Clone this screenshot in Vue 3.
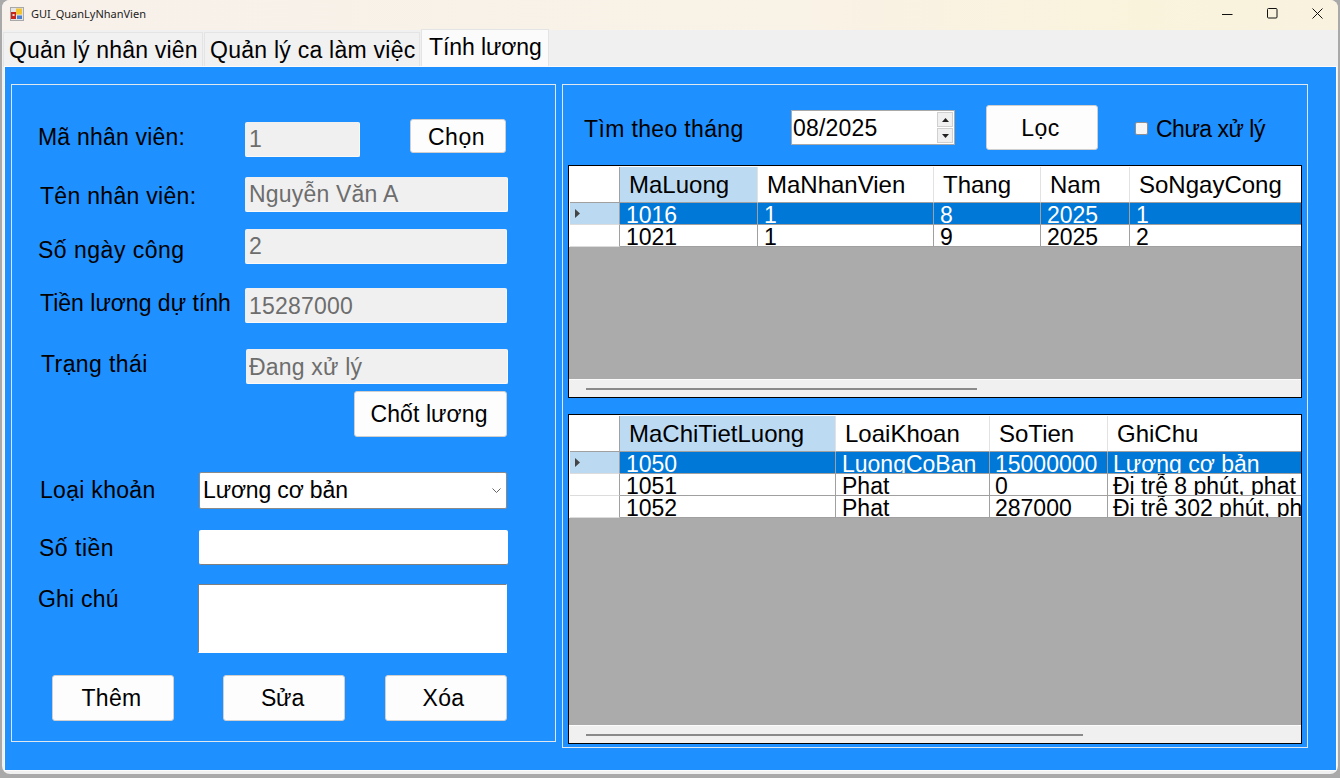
<script setup>
const grid1 = {
  cols: [50, 138, 176, 107, 89, 240],
  head: ['MaLuong', 'MaNhanVien', 'Thang', 'Nam', 'SoNgayCong'],
  rows: [
    ['1016', '1', '8', '2025', '1'],
    ['1021', '1', '9', '2025', '2'],
  ],
}
const grid2 = {
  cols: [50, 216, 154, 118, 260],
  head: ['MaChiTietLuong', 'LoaiKhoan', 'SoTien', 'GhiChu'],
  rows: [
    ['1050', 'LuongCoBan', '15000000', 'Lương cơ bản'],
    ['1051', 'Phat', '0', 'Đi trễ 8 phút, phạt 0'],
    ['1052', 'Phat', '287000', 'Đi trễ 302 phút, phạt'],
  ],
}
const tpl = (g) => ({ gridTemplateColumns: g.cols.map((c) => c + 'px').join(' ') })
const grids = [
  { ...grid1, cls: 'dg1', thumb: 'th1' },
  { ...grid2, cls: 'dg2', thumb: 'th2' },
]
</script>

<template>
  <div class="win">
    <header class="titlebar">
      <svg class="appicon" width="14" height="14" viewBox="0 0 14 14">
        <rect x="0.5" y="0.5" width="13" height="13" fill="#e4e4e4" stroke="#a8a8a8" />
        <rect x="1" y="5" width="5" height="7" fill="#c8241c" />
        <rect x="2.5" y="7" width="2" height="2" fill="#f4dcd8" />
        <rect x="6" y="1.5" width="6" height="6" fill="#f2c230" />
        <rect x="7" y="8.5" width="5" height="3.5" fill="#4a7fd0" />
      </svg>
      <span class="wintitle">GUI_QuanLyNhanVien</span>
      <div class="controls">
        <svg width="11" height="11" viewBox="0 0 11 11"><path d="M0 6.5H10.5" stroke="#111" fill="none" /></svg>
        <svg width="11" height="11" viewBox="0 0 11 11"><rect x="0.5" y="0.5" width="9.5" height="9.5" rx="1" stroke="#111" fill="none" /></svg>
        <svg width="11" height="11" viewBox="0 0 11 11"><path d="M0.5 0.5L10.5 10.5M10.5 0.5L0.5 10.5" stroke="#111" fill="none" /></svg>
      </div>
    </header>

    <nav class="tabs">
      <div class="tab t1">Quản lý nhân viên</div>
      <div class="tab t2">Quản lý ca làm việc</div>
      <div class="tab t3 active">Tính lương</div>
    </nav>

    <main class="content">
      <section class="panel left">
        <div class="row r1">
          <label class="lbl">Mã nhân viên:</label>
          <input class="field ro w115" value="1" readonly />
          <button class="btn chon">Chọn</button>
        </div>
        <div class="row r2">
          <label class="lbl">Tên nhân viên:</label>
          <input class="field ro w263" value="Nguyễn Văn A" readonly />
        </div>
        <div class="row r3">
          <label class="lbl">Số ngày công</label>
          <input class="field ro w262" value="2" readonly />
        </div>
        <div class="row r4">
          <label class="lbl">Tiền lương dự tính</label>
          <input class="field ro w262" value="15287000" readonly />
        </div>
        <div class="row r5">
          <label class="lbl">Trạng thái</label>
          <input class="field ro w262" value="Đang xử lý" readonly />
        </div>
        <div class="row r6">
          <button class="btn chot">Chốt lương</button>
        </div>
        <div class="row r7">
          <label class="lbl">Loại khoản</label>
          <div class="combo">
            <span>Lương cơ bản</span>
            <svg width="9" height="6" viewBox="0 0 9 6"><path d="M0.5 0.5L4.5 4.5L8.5 0.5" stroke="#666" fill="none" /></svg>
          </div>
        </div>
        <div class="row r8">
          <label class="lbl">Số tiền</label>
          <input class="field plain" value="" />
        </div>
        <div class="row r9">
          <label class="lbl">Ghi chú</label>
          <textarea class="note"></textarea>
        </div>
        <div class="row r10">
          <button class="btn act">Thêm</button>
          <button class="btn act sua">Sửa</button>
          <button class="btn act xoa">Xóa</button>
        </div>
      </section>

      <section class="panel right">
        <div class="toolbar">
          <label class="lbl find">Tìm theo tháng</label>
          <div class="spin">
            <span class="spinval">08/2025</span>
            <div class="spinbtns">
              <span class="sb"><svg width="7" height="4" viewBox="0 0 7 4"><path d="M3.5 0L7 4H0Z" fill="#222" /></svg></span>
              <span class="sb"><svg width="7" height="4" viewBox="0 0 7 4"><path d="M0 0H7L3.5 4Z" fill="#222" /></svg></span>
            </div>
          </div>
          <button class="btn loc">Lọc</button>
          <span class="check"></span>
          <span class="lbl checktext">Chưa xử lý</span>
        </div>

        <div v-for="g in grids" :key="g.cls" class="dg" :class="g.cls">
          <div class="dgrow head" :style="tpl(g)">
            <div class="hc corner"></div>
            <div v-for="(h, i) in g.head" :key="h" class="hc" :class="{ cur: i === 0 }">{{ h }}</div>
          </div>
          <div v-for="(r, ri) in g.rows" :key="r[0]" class="dgrow body" :class="{ sel: ri === 0 }" :style="tpl(g)">
            <div class="rh">
              <svg v-if="ri === 0" width="5" height="9" viewBox="0 0 5 9"><path d="M0 0L5 4.5L0 9Z" fill="#444" /></svg>
            </div>
            <div v-for="(c, ci) in r" :key="ci" class="cell">{{ c }}</div>
          </div>
          <div class="fill"></div>
          <div class="hscroll"><span class="thumb" :class="g.thumb"></span></div>
        </div>
      </section>
    </main>
  </div>
</template>

<style>
html, body { margin: 0; background: #a9a9a9; overflow: hidden; }
</style>

<style scoped>
* { box-sizing: border-box; }
.win {
  width: 1336px; height: 774px; margin-left: 2px; background: #f0f0f0;
  border-radius: 8px; overflow: hidden; color: #000;
  font-family: "Liberation Sans", Arial, sans-serif; font-size: 23px;
  display: flex; flex-direction: column;
}
.titlebar {
  height: 30px; flex: none; display: flex; align-items: center; padding: 0 0 3px 8px;
  background: linear-gradient(90deg, #f8f1eb 0%, #f9f2e6 60%, #faf3dc 85%, #f8f2df 100%);
}
.appicon { flex: none; }
.wintitle { margin-left: 7px; font: 11px "Noto Sans", sans-serif; color: #222; }
.controls { margin-left: auto; padding-right: 15px; display: flex; gap: 34px; align-items: center; }

.tabs { height: 37px; flex: none; display: flex; align-items: flex-end; padding-left: 1px; }
.tab {
  height: 35px; background: #f1f1f1; border: 1px solid #e4e4e4; border-bottom: none;
  line-height: 35px; white-space: nowrap; padding-left: 5px; margin-right: 1px; letter-spacing: 0.2px;
}
.t1 { width: 200px; }
.t2 { width: 216px; padding-left: 5px; letter-spacing: 0.25px; }
.t3 { width: 128px; }
.active { height: 38px; background: #fbfbfb; line-height: 35px; padding-left: 7px; letter-spacing: -0.1px; }

.content {
  height: 703px; flex: none; margin-left: 3px; width: 1331px; background: #1e90ff;
  display: flex; align-items: flex-start; padding: 17px 0 0 6px;
  box-shadow: 0 0 0 1px #fbfbfb;
}
.panel { border: 1px solid #dfe8f0; flex: none; }
.left { width: 545px; height: 658px; }
.right { width: 746px; height: 664px; margin-left: 6px; }

.row { display: flex; align-items: flex-start; }
.lbl { line-height: 28px; white-space: nowrap; display: block; flex: none; letter-spacing: 0.2px; }
.field {
  height: 35px; border: none; border-radius: 2px; font: inherit; padding: 1px 3px 0 4px; margin: 0;
  outline: none; flex: none; display: block; letter-spacing: 0.2px;
}
.ro { background: #f0f0f0; color: #6d6d6d; border-bottom: 1px solid #fafafa; border-right: 1px solid #fafafa; }
.w115 { width: 115px; }
.w263 { width: 263px; }
.w262 { width: 262px; }
.btn {
  font: inherit; color: #000; background: #fdfdfd; border: 1px solid #cfcfcf; border-radius: 3px;
  padding: 2px 3px 0 0; flex: none; letter-spacing: 0.1px;
}

.r1 { margin-top: 34px; }
.r1 .lbl { width: 233px; padding-left: 26px; margin-top: 4px; }
.r1 .field { margin-top: 3px; }
.chon { width: 96px; height: 34px; margin-left: 50px; letter-spacing: 0.5px; }
.r2 { margin-top: 20px; }
.r2 .lbl { width: 233px; padding-left: 28px; margin-top: 5px; letter-spacing: 0.3px; }
.r3 { margin-top: 17px; }
.r3 .lbl { width: 233px; padding-left: 26px; margin-top: 7px; letter-spacing: 0.5px; }
.r4 { margin-top: 24px; }
.r4 .lbl { width: 233px; padding-left: 28px; margin-top: 1px; letter-spacing: 0; }
.r4 .field { padding-top: 3px; }
.r5 { margin-top: 26px; }
.r5 .lbl { width: 234px; padding-left: 29px; margin-top: 1px; letter-spacing: 0.4px; }
.r5 .field { padding: 3px 3px 0 3px; }
.r6 { margin-top: 7px; }
.chot { width: 153px; height: 46px; margin-left: 342px; padding-top: 0; }
.r7 { margin-top: 35px; }
.r7 .lbl { width: 187px; padding-left: 28px; margin-top: 4px; letter-spacing: 0.3px; }
.combo {
  width: 308px; height: 37px; background: #fff; border: 1px solid #8a8a8a; border-radius: 2px;
  display: flex; align-items: center; justify-content: space-between; padding: 0 5px 0 3px; flex: none;
  letter-spacing: -0.15px;
}
.r8 { margin-top: 21px; }
.r8 .lbl { width: 187px; padding-left: 27px; margin-top: 4px; letter-spacing: 0.5px; }
.plain { width: 309px; background: #fff; border-bottom: 1px solid #808080; }
.r9 { margin-top: 19px; }
.r9 .lbl { width: 186px; padding-left: 26px; margin-top: 1px; }
.note {
  width: 309px; height: 69px; resize: none; background: #fff; margin: 0; padding: 0; outline: none; flex: none; display: block;
  border: 1px solid #fff; border-top-color: #7f7f7f; border-left-color: #7f7f7f; border-radius: 0;
}
.r10 { margin-top: 22px; padding-left: 40px; }
.act { width: 122px; height: 46px; letter-spacing: 0.3px; padding-top: 1px; }
.sua { margin-left: 49px; letter-spacing: -0.1px; }
.xoa { margin-left: 40px; padding-right: 5px; }

.toolbar { display: flex; align-items: flex-start; padding: 20px 0 0 21px; height: 65px; }
.find { width: 207px; margin-top: 10px; letter-spacing: 0.35px; }
.spin {
  width: 164px; height: 35px; margin-top: 5px; background: #fff; border: 1px solid #a9a9a9;
  display: flex; align-items: center; justify-content: space-between; flex: none; padding-left: 1px;
}
.spinval { line-height: 34px; padding-top: 1px; letter-spacing: 0.2px; }
.spinbtns { display: flex; flex-direction: column; gap: 1px; padding-right: 1px; }
.sb {
  width: 16px; height: 15px; background: #f0f0f0; border: 1px solid #d0d0d0;
  display: flex; align-items: center; justify-content: center;
}
.loc { width: 112px; height: 45px; margin-left: 31px; letter-spacing: 0.4px; }
.check {
  width: 13px; height: 13px; margin: 17px 0 0 37px; background: #f6f6f6; border: 1px solid #8f8f8f; border-radius: 2px; flex: none;
}
.checktext { margin: 10px 0 0 8px; letter-spacing: -0.5px; }

.dg {
  width: 734px; margin: 15px 0 0 5px; border: 1px solid #000; background: #fff; overflow: hidden;
  display: flex; flex-direction: column;
}
.dg1 { height: 233px; }
.dg2 { height: 330px; margin-top: 16px; }
.dgrow { display: grid; padding-left: 1px; background: #fff; flex: none; }
.head { height: 37px; }
.hc {
  height: 36px; margin-top: 1px; border-right: 1px solid #e2e2e2; border-bottom: 1px solid #a0a0a0;
  padding-left: 9px; font-size: 24px; line-height: 36px; white-space: nowrap; overflow: hidden;
}
.corner { border-right-color: #a0a0a0; }
.cur { background: #bcdbf3; }
.body { height: 22px; }
.rh {
  height: 22px; display: flex; align-items: center; padding: 0 0 1px 5px;
  border-right: 1px solid #a0a0a0; border-bottom: 1px solid #dcdcdc; background: #fff;
}
.cell {
  height: 22px; padding-left: 6px; line-height: 24px; white-space: nowrap; overflow: hidden;
  border-right: 1px solid #a0a0a0; border-bottom: 1px solid #a0a0a0; background: #fff;
}
.dg2 .cell:nth-child(n + 4) { padding-left: 5px; }
.sel .rh { background: #bbdaf2; }
.sel .cell { background: #0078d7; color: #fff; }
.fill { flex: 1; background: #ababab; }
.hscroll {
  height: 18px; flex: none; background: #f0f0f0; border-top: 1px solid #fbfbfb; padding-top: 8px;
  padding-left: 17px;
}
.thumb { display: block; height: 2px; background: #8a8a8a; }
.th1 { width: 391px; }
.th2 { width: 497px; }
</style>
